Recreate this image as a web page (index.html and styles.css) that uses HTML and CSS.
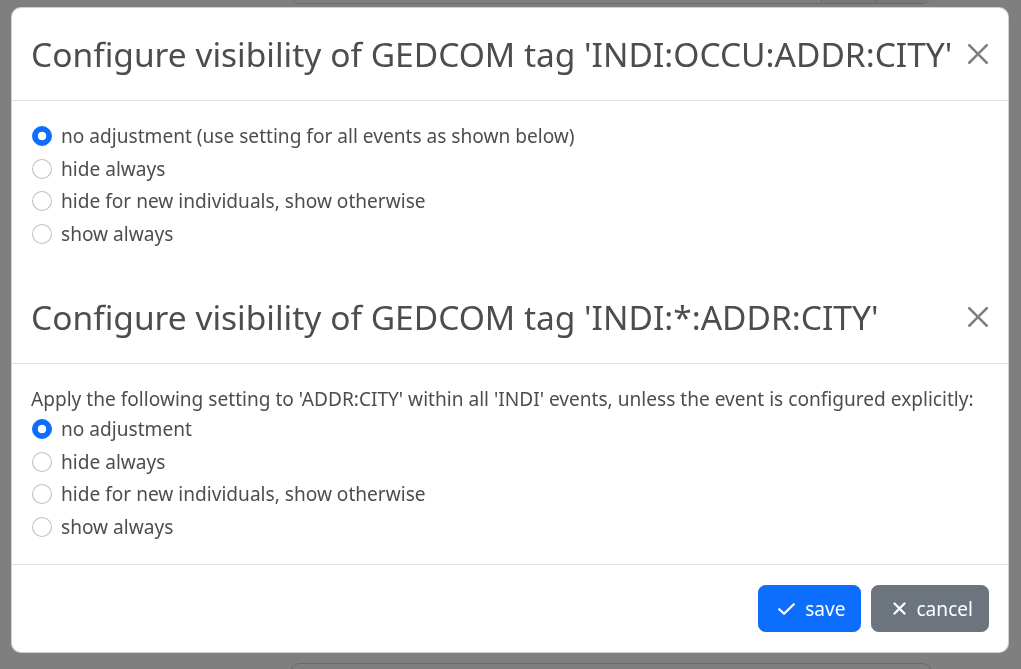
FILE: index.html
```html
<!DOCTYPE html>
<html lang="en">
<head>
<meta charset="utf-8">
<title>Configure visibility</title>
<link rel="stylesheet" href="styles.css">
</head>
<body>
<div class="page">
  <div class="page-row page-row-top">
    <div class="page-label"><span class="page-mark"></span></div>
    <div class="input-group">
      <div class="ig-field"></div>
      <div class="ig-addon"></div>
      <div class="ig-addon ig-last"></div>
    </div>
  </div>
  <div class="page-spacer"></div>
  <div class="page-row page-row-bottom">
    <div class="page-label"></div>
    <div class="input-group">
      <div class="ig-field"></div>
    </div>
  </div>
</div>
<div class="backdrop"></div>
<div class="modal">
  <div class="modal-header">
    <h3 class="modal-title">Configure visibility of GEDCOM tag 'INDI:OCCU:ADDR:CITY'</h3>
    <button class="btn-close" type="button" aria-label="Close"><svg viewBox="0 0 16 16" width="20" height="20"><path fill="#000" d="M.293.293a1 1 0 0 1 1.414 0L8 6.586 14.293.293a1 1 0 1 1 1.414 1.414L9.414 8l6.293 6.293a1 1 0 0 1-1.414 1.414L8 9.414l-6.293 6.293a1 1 0 0 1-1.414-1.414L6.586 8 .293 1.707a1 1 0 0 1 0-1.414z"/></svg></button>
  </div>
  <div class="modal-body">
    <label class="form-check"><span class="radio checked"></span><span>no adjustment (use setting for all events as shown below)</span></label>
    <label class="form-check"><span class="radio"></span><span>hide always</span></label>
    <label class="form-check"><span class="radio"></span><span>hide for new individuals, show otherwise</span></label>
    <label class="form-check"><span class="radio"></span><span>show always</span></label>
  </div>
  <div class="modal-header">
    <h3 class="modal-title">Configure visibility of GEDCOM tag 'INDI:*:ADDR:CITY'</h3>
    <button class="btn-close" type="button" aria-label="Close"><svg viewBox="0 0 16 16" width="20" height="20"><path fill="#000" d="M.293.293a1 1 0 0 1 1.414 0L8 6.586 14.293.293a1 1 0 1 1 1.414 1.414L9.414 8l6.293 6.293a1 1 0 0 1-1.414 1.414L8 9.414l-6.293 6.293a1 1 0 0 1-1.414-1.414L6.586 8 .293 1.707a1 1 0 0 1 0-1.414z"/></svg></button>
  </div>
  <div class="modal-body">
    <p class="intro">Apply the following setting to 'ADDR:CITY' within all 'INDI' events, unless the event is configured explicitly:</p>
    <label class="form-check"><span class="radio checked"></span><span>no adjustment</span></label>
    <label class="form-check"><span class="radio"></span><span>hide always</span></label>
    <label class="form-check"><span class="radio"></span><span>hide for new individuals, show otherwise</span></label>
    <label class="form-check"><span class="radio"></span><span>show always</span></label>
  </div>
  <div class="modal-footer">
    <button class="btn btn-primary" type="button"><svg class="ico-check" viewBox="0 0 17 12" width="17" height="12"><path d="M1.2 6.2 L6 10.8 L15.8 1.2" fill="none" stroke="#fff" stroke-width="2.2" stroke-linecap="round" stroke-linejoin="round"/></svg><span>save</span></button>
    <button class="btn btn-secondary" type="button"><svg class="ico-x" viewBox="0 0 13 13" width="13" height="13"><path d="M1.5 1.5 L11.5 11.5 M11.5 1.5 L1.5 11.5" fill="none" stroke="#fff" stroke-width="2.3" stroke-linecap="round"/></svg><span>cancel</span></button>
  </div>
</div>
</body>
</html>
```
FILE: styles.css
```css
* { box-sizing: border-box; }
html, body { margin: 0; padding: 0; }
body {
  width: 1021px;
  height: 669px;
  overflow: hidden;
  background: #fff;
  font-family: "Noto Sans", "Open Sans", sans-serif;
  color: #4d4d4d;
}
.page {
  display: flex;
  flex-direction: column;
  height: 669px;
  overflow: hidden;
}
.page-row {
  display: flex;
  align-items: flex-start;
  height: 48px;
  flex: none;
}
.page-row-top { margin-top: -44px; }
.page-spacer { flex: 1; }
.page-row-bottom { margin-bottom: -42px; }
.page-label {
  width: 290px;
  padding-left: 71px;
  padding-top: 38px;
}
.page-mark {
  display: block;
  width: 4px;
  height: 6px;
  border-radius: 0 0 2px 2px;
  background: #0d6efd;
}
.input-group {
  display: flex;
  width: 642px;
  height: 48px;
  border: 1px solid #ced4da;
  border-radius: 10px;
  overflow: hidden;
}
.ig-field { flex: 1; }
.ig-addon {
  width: 55px;
  border-left: 1px solid #ced4da;
  background: #f0f0f0;
}
.ig-last { width: 55px; }
.backdrop {
  position: fixed;
  inset: 0;
  background: rgba(0, 0, 0, 0.5);
}
.modal {
  position: fixed;
  left: 11px;
  top: 7px;
  width: 998px;
  background: #fff;
  border: 1px solid rgba(0, 0, 0, 0.175);
  border-radius: 10px;
  display: flex;
  flex-direction: column;
}
.modal-header {
  display: flex;
  align-items: center;
  padding: 20px 20px 20px 19px;
  border-bottom: 1px solid #dee2e6;
}
.modal-title {
  margin: 0;
  font-size: 33.5px;
  line-height: 52px;
  font-weight: 400;
  color: #4d4d4d;
  white-space: nowrap;
}
.btn-close {
  margin: -10px -10px -10px auto;
  padding: 10px;
  border: 0;
  background: transparent;
  opacity: 0.5;
  display: flex;
  cursor: pointer;
}
.modal-body {
  padding: 20px 20px 20px 19px;
  font-size: 19.1px;
  line-height: 30px;
}
.intro { margin: 0; white-space: nowrap; }
.form-check {
  display: flex;
  align-items: flex-start;
  margin-bottom: 2.5px;
  min-height: 30px;
}
.radio {
  flex: none;
  width: 20px;
  height: 20px;
  margin-top: 5px;
  margin-left: 1px;
  margin-right: 9px;
  border-radius: 50%;
  border: 1px solid rgba(0, 0, 0, 0.25);
  background: #fff;
}
.radio.checked {
  border-color: #0d6efd;
  background: radial-gradient(circle, #fff 0 4px, #0d6efd 4.6px);
}
.modal-footer {
  display: flex;
  justify-content: flex-end;
  align-items: center;
  padding: 15px 14px 15px 15px;
  border-top: 1px solid #dee2e6;
}
.btn {
  margin: 5px;
  display: flex;
  align-items: center;
  height: 47px;
  padding: 0 15px;
  border: 1px solid transparent;
  border-radius: 7.5px;
  font-family: inherit;
  font-size: 19.1px;
  line-height: 30px;
  color: #fff;
  cursor: pointer;
}
.btn-primary { background: #0d6efd; border-color: #0d6efd; }
.btn-secondary { background: #6c757d; border-color: #6c757d; }
.ico-check { margin-left: 4px; margin-right: 10px; }
.ico-x { margin-left: 6px; margin-right: 10px; }
```
